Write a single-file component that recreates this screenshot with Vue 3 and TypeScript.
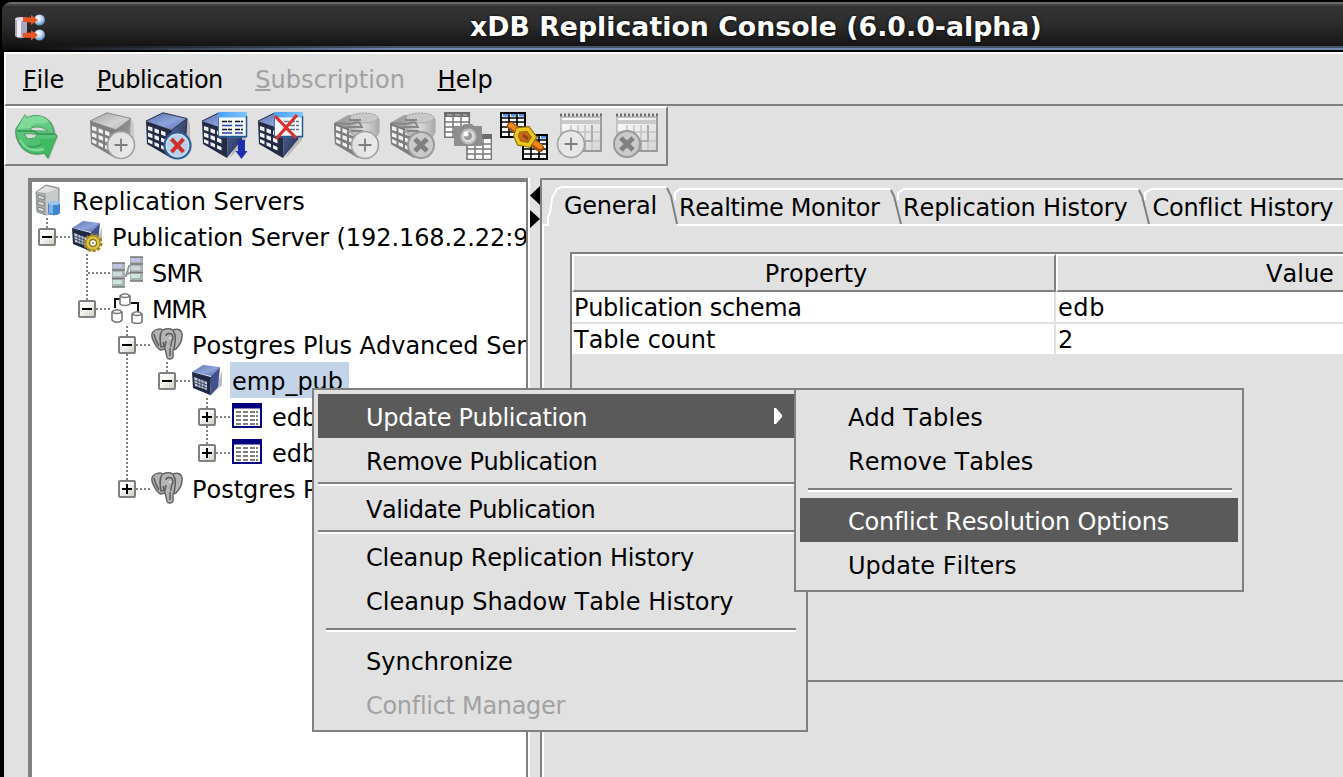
<script setup lang="ts">
interface TreeRow {
  label: string
  depth: number
  icon: string
  box?: '+' | '-'
  selected?: boolean
  track?: number
}
interface MenuEntry {
  label?: string
  kind?: 'wide' | 'inset'
  active?: boolean
  disabled?: boolean
  arrow?: boolean
  track?: number
}

const spacing = (px?: number) => ({ letterSpacing: (px ?? 0) + 'px' })

const menus = [
  { key: 'F', rest: 'ile', disabled: false, track: -0.2 },
  { key: 'P', rest: 'ublication', disabled: false, track: -0.55 },
  { key: 'S', rest: 'ubscription', disabled: true, track: 0.05 },
  { key: 'H', rest: 'elp', disabled: false, track: 0.2 },
]

const toolGroups: string[][] = [
  ['refresh'],
  ['cube-add', 'cube-remove', 'cube-sub', 'cube-unsub'],
  ['db-add', 'db-remove', 'snapshot', 'link', 'table-add', 'table-remove'],
]

const rows: TreeRow[] = [
  { label: 'Replication Servers', depth: 0, icon: 'server', track: 0 },
  { label: 'Publication Server (192.168.2.22:9051)', depth: 1, icon: 'pubserver', box: '-', track: -0.08 },
  { label: 'SMR', depth: 2, icon: 'smr', track: -0.8 },
  { label: 'MMR', depth: 2, icon: 'mmr', box: '-', track: -1.4 },
  { label: 'Postgres Plus Advanced Server', depth: 3, icon: 'elephant', box: '-' },
  { label: 'emp_pub', depth: 4, icon: 'cube-small', box: '-', selected: true },
  { label: 'edb.dept', depth: 5, icon: 'grid', box: '+' },
  { label: 'edb.emp', depth: 5, icon: 'grid', box: '+' },
  { label: 'Postgres Plus Advanced Server', depth: 3, icon: 'elephant', box: '+' },
]

const connectors = [
  'M47 218V228', 'M56 237H72',
  'M87 254V300', 'M88 273H112', 'M96 309H112',
  'M127 326V336', 'M127 354V480', 'M136 345H152', 'M136 489H152',
  'M167 362V372', 'M176 381H192',
  'M207 398V408', 'M207 426V444', 'M216 417H232', 'M216 453H232',
]

const tabs = [
  { label: 'General', track: -0.25 },
  { label: 'Realtime Monitor', track: -0.33 },
  { label: 'Replication History', track: -0.12 },
  { label: 'Conflict History', track: -0.2 },
]
const props = [
  { name: 'Publication schema', value: 'edb', nameTrack: -0.33, valueTrack: 0.6 },
  { name: 'Table count', value: '2', nameTrack: 0, valueTrack: 0 },
]

const mainMenu: MenuEntry[] = [
  { label: 'Update Publication', active: true, arrow: true, track: -0.3 },
  { label: 'Remove Publication', track: -0.38 },
  { kind: 'wide' },
  { label: 'Validate Publication', track: -0.45 },
  { kind: 'wide' },
  { label: 'Cleanup Replication History', track: -0.19 },
  { label: 'Cleanup Shadow Table History' },
  { kind: 'inset' },
  { label: 'Synchronize' },
  { label: 'Conflict Manager', disabled: true, track: -0.3 },
]
const subMenu: MenuEntry[] = [
  { label: 'Add Tables', track: 0.2 },
  { label: 'Remove Tables', track: 0.05 },
  { kind: 'inset' },
  { label: 'Conflict Resolution Options', active: true, track: -0.16 },
  { label: 'Update Filters', track: 0.03 },
]
</script>

<template>
  <div class="window">
    <svg class="defs" width="0" height="0">
      <defs>
        <linearGradient id="gBlue" x1="0" y1="0" x2="1" y2="1">
          <stop offset="0" stop-color="#5b6faa" /><stop offset=".55" stop-color="#8ea2dc" /><stop offset="1" stop-color="#5468a6" />
        </linearGradient>
        <linearGradient id="gGray" x1="0" y1="0" x2="1" y2="1">
          <stop offset="0" stop-color="#a5a5a5" /><stop offset=".6" stop-color="#d2d2d2" /><stop offset="1" stop-color="#b0b0b0" />
        </linearGradient>
        <linearGradient id="gSide" x1="0" y1="0" x2="1" y2="1">
          <stop offset="0" stop-color="#5567a2" /><stop offset="1" stop-color="#222a48" />
        </linearGradient>
        <linearGradient id="gSideG" x1="0" y1="0" x2="1" y2="1">
          <stop offset="0" stop-color="#777" /><stop offset="1" stop-color="#a8a8a8" />
        </linearGradient>
        <linearGradient id="gSky" x1="0" y1="0" x2="1" y2="0">
          <stop offset="0" stop-color="#4aa0f4" /><stop offset="1" stop-color="#7dc4fb" />
        </linearGradient>
        <linearGradient id="gGreen" x1="0" y1="0" x2="0" y2="1">
          <stop offset="0" stop-color="#6fcf8a" /><stop offset="1" stop-color="#3fb864" />
        </linearGradient>
        <linearGradient id="gCyl" x1="0" y1="0" x2="1" y2="0">
          <stop offset="0" stop-color="#a9a9a9" /><stop offset=".5" stop-color="#dadada" /><stop offset="1" stop-color="#ababab" />
        </linearGradient>
        <linearGradient id="gSheet" x1="0" y1="0" x2="1" y2="1">
          <stop offset="0" stop-color="#fff" /><stop offset="1" stop-color="#d4d4d4" />
        </linearGradient>
        <radialGradient id="gSphere" cx=".4" cy=".35" r=".7">
          <stop offset="0" stop-color="#fff" /><stop offset=".45" stop-color="#c3dcf8" /><stop offset="1" stop-color="#4d7cbb" />
        </radialGradient>
      </defs>

      <symbol id="windows" viewBox="0 0 48 48">
        <path d="M4 14l4.500 1.600v4L4 18zM10.500 16.300l4.500 1.600v4l-4.500-1.600zM17 18.600l4.500 1.600v4L17 22.600zM4 20.500l4.500 1.800v4L4 24.500zM10.500 23l4.500 1.800v4L10.500 27zM17 25.600l4.500 1.800v4L17 29.600zM4 27l4.500 2v3.600l-4.500-2zM10.500 30l4.500 2v3.600l-4.500-2zM17 33l4.500 2v3.600l-4.500-2z" fill="#eef0f2" />
      </symbol>
      <symbol id="cube" viewBox="0 0 48 48">
        <path d="M30 46L46 28V12l-2-5-8 24z" fill="#000" opacity=".18" />
        <path d="M2 9L19 .8 43 6.500 28 18z" fill="url(#gBlue)" />
        <path d="M28 18L43 6.500 41.500 28 27 46z" fill="url(#gSide)" />
        <path d="M2 9l26 9-1 28L3 32z" fill="#232b45" />
        <path d="M2 9L19 .8 43 6.500M41.500 28L43 6.500 28 18" fill="none" stroke="#252d48" stroke-width="1" />
        <use href="#windows" />
      </symbol>
      <symbol id="cubeG" viewBox="0 0 48 48">
        <path d="M30 46L46 28V12l-2-5-8 24z" fill="#000" opacity=".1" />
        <path d="M2 9L19 .8 43 6.500 28 18z" fill="url(#gGray)" stroke="#8b8b8b" />
        <path d="M28 18L43 6.500 41.500 28 27 46z" fill="url(#gSideG)" />
        <path d="M2 9l26 9-1 28L3 32z" fill="#808080" />
        <use href="#windows" />
      </symbol>
      <symbol id="dbG" viewBox="0 0 48 48">
        <path d="M2 11L16 3l14 0 8 16-6 26-5 1L3 32z" fill="#a2a2a2" />
        <path d="M2 11l25 8-1 27L3 32z" fill="#7d7d7d" />
        <use href="#windows" />
        <path d="M17 7V20l9 7h17l4-7V7z" fill="url(#gCyl)" stroke="#a4a4a4" />
        <ellipse cx="32" cy="6" rx="14" ry="5" fill="#c8c8c8" stroke="#999" stroke-dasharray="2 1" />
        <path d="M3 11l14 1 10-2M15 15h15l-3-5M19 19h12M17 8h12" stroke="#868686" stroke-width="1.800" fill="none" />
      </symbol>
      <symbol id="badgeAdd" viewBox="0 0 48 48">
        <circle cx="33" cy="33" r="13.500" fill="#e8e8e8" fill-opacity=".94" stroke="#a0a0a0" stroke-width="1.600" />
        <path d="M33 26.500v13M26.500 33h13" stroke="#7d7d7d" stroke-width="1.800" />
      </symbol>
      <symbol id="badgeDel" viewBox="0 0 48 48">
        <circle cx="33" cy="33" r="13" fill="#cacaca" stroke="#999" stroke-width="2" />
        <path d="M27 27l12 12M39 27l-12 12" stroke="#808080" stroke-width="5" />
      </symbol>
      <symbol id="cube-add" viewBox="0 0 48 48"><use href="#cubeG" /><use href="#badgeAdd" /></symbol>
      <symbol id="cube-remove" viewBox="0 0 48 48">
        <use href="#cube" />
        <circle cx="33.500" cy="33.500" r="13" fill="#b9cfe9" stroke="#2e5f9a" stroke-width="2.200" />
        <circle cx="33.500" cy="33.500" r="11.200" fill="none" stroke="#d4e3f5" stroke-width="1" />
        <path d="M27.500 27l12 13M39.500 27l-12 13" stroke="#cf2d28" stroke-width="4" />
      </symbol>
      <symbol id="panel" viewBox="0 0 48 48">
        <path d="M18.500 1h28v24h-28z" fill="#f4faff" stroke="#3c76b8" />
        <path d="M18 0h29v5.500H18z" fill="url(#gSky)" />
        <path d="M18 24.500h28.500V4" fill="none" stroke="#235a8e" stroke-width="1.500" />
      </symbol>
      <symbol id="cube-sub" viewBox="0 0 48 48">
        <use href="#cube" /><use href="#panel" />
        <path d="M22 9.500h10M35 9.500h8M22 17.500h10M35 17.500h8" stroke="#111" stroke-width="1.600" stroke-dasharray="5 1" />
        <path d="M22 13.500h10M35 13.500h8M22 21h10M35 21h8" stroke="#2c3db2" stroke-width="1.600" />
        <path d="M38 28h7v11h2.500l-6 8-6-8H38z" fill="#1c30ae" />
      </symbol>
      <symbol id="cube-unsub" viewBox="0 0 48 48">
        <use href="#cube" /><use href="#panel" />
        <path d="M28 9.500h15M28 13.500h15M28 17.500h15" stroke="#63738e" stroke-width="1.500" stroke-dasharray="5 1" />
        <path d="M19 4l21 22M41 3L20 27" stroke="#dc302a" stroke-width="3.200" />
      </symbol>
      <symbol id="db-add" viewBox="0 0 48 48"><use href="#dbG" /><use href="#badgeAdd" /></symbol>
      <symbol id="db-remove" viewBox="0 0 48 48"><use href="#dbG" /><use href="#badgeDel" /></symbol>
      <symbol id="refresh" viewBox="0 0 48 48">
        <path d="M14 4c10-3 24-1 29 13l3 9-9 21-4-5C18 46 8 38 6 27z" fill="#222" opacity=".13" />
        <path d="M13 3l2 3c8-4 17-3 22 3 3 3 5 7 5 12l3 3-9 22-4-5c-9 3-19 0-24-8-3-5-5-11-4-16z" fill="url(#gGreen)" stroke="#4a9a62" stroke-width="1.200" />
        <path d="M5 17l8-14 2 3c9-4 18-3 22 4l-6 2-6-1-6 3 3 2z" fill="#86dd9d" opacity=".8" />
        <path d="M19 16c6-2 13-1 17 3l-17 0zM12 22c5-1 10 0 13 1l-2 3-7 1z" fill="#d3ddd4" stroke="#4a9a62" />
        <path d="M5 19h17l4 3h16M8 31c5 4 13 6 20 2l5-4" fill="none" stroke="#2f9450" stroke-width="1.300" />
        <path d="M8 28c5 9 13 12 24 9" fill="none" stroke="#7cd896" stroke-width="2.500" />
        <path d="M27 27l17-1-8 19z" fill="#3fba62" />
      </symbol>
      <symbol id="snapshot" viewBox="0 0 48 48">
        <g fill="#fff" stroke="#777" stroke-width="1.600">
          <path d="M.8.8h24.500v24.500H.8zM23 23h24.500v24.500H23z" />
        </g>
        <path d="M0 0h26v5H0zM22 22h26v5H22z" fill="#6c6c6c" />
        <path d="M1 10h24M1 15h24M1 20h24M9 1v24M17 1v24M23 32h24M23 37h24M23 42h24M31 23v24M39 23v24" stroke="#777" stroke-width="1.500" />
        <path d="M3 3h5M11 3h5M19 3h4" stroke="#aaa" stroke-width="1.500" />
        <path d="M10 14h8l2-2h8l2 2h8v20H10z" fill="#8e8e8e" />
        <circle cx="24.500" cy="24.500" r="7" fill="#ddd" stroke="#bcbcbc" stroke-width="2" /><circle cx="24" cy="24" r="4" fill="#999" /><circle cx="22" cy="22" r="2.500" fill="#fff" />
      </symbol>
      <symbol id="link" viewBox="0 0 48 48">
        <path d="M1 1h24v24H1zM23 23h24v24H23z" fill="#fff" stroke="#000" stroke-width="2" />
        <path d="M1 6h24M1 10h24M1 15h24M1 20h24M9 1v24M17 1v24M23 28h24M23 32h24M23 37h24M23 42h24M31 23v24M39 23v24" stroke="#000" stroke-width="1.600" />
        <path d="M3 3.200h5M11 3.200h5M19 3.200h5M33 25.200h5M41 25.200h5" stroke="#4d92ee" stroke-width="2.400" />
        <path d="M11 14l10 7M31 29l9 7" stroke="#a04c10" stroke-width="8" stroke-linecap="round" />
        <path d="M11 13.500l10 7M31 28.500l9 6" stroke="#f0881a" stroke-width="5" stroke-linecap="round" />
        <path d="M18 18l10-1 6 8-5 8-10-2-3-7z" fill="#ce6619" stroke="#8a6c00" stroke-width="5.500" />
        <path d="M18 18l10-1 6 8-5 8-10-2-3-7z" fill="none" stroke="#edc51d" stroke-width="3.500" />
        <path d="M23 23l5 4" stroke="#8f4412" stroke-width="3" />
      </symbol>
      <symbol id="sheet" viewBox="0 0 48 48">
        <path d="M5 5h40v34H5z" fill="url(#gSheet)" stroke="#b3b3b3" stroke-width="1.500" />
        <path d="M4 3h43" stroke="#6e6e6e" stroke-width="3" stroke-dasharray="2 2" />
        <path d="M5 8h40v4H5z" fill="#c9c9c9" />
        <path d="M6 20h38M6 29h38M15 13v25M22 13v25M29 13v25M36 13v25" stroke="#c4c4c4" stroke-width="1.500" />
        <path d="M36 13v16h-7v9" fill="none" stroke="#a2a2a2" stroke-width="1.500" />
        <path d="M45 5v34H26" fill="none" stroke="#999" stroke-width="1.800" />
      </symbol>
      <symbol id="table-add" viewBox="0 0 48 48"><use href="#sheet" /><use href="#badgeAdd" x="-18" y="-1" /></symbol>
      <symbol id="table-remove" viewBox="0 0 48 48"><use href="#sheet" /><use href="#badgeDel" x="-18" y="-1" /></symbol>

      <symbol id="server" viewBox="0 0 32 32">
        <path d="M1 8L11 1l13 3v24l-13 3-9-3z" fill="#a7abaa" stroke="#8c9290" />
        <path d="M2 8l9-6 12 3-12 4z" fill="#e0e3e2" />
        <path d="M11 9l12-4v23l-12 3z" fill="#c7cbca" />
        <path d="M3 11l6 2v3l-6-2zM3 17l6 2v3l-6-2zM3 23l6 2v3l-6-2z" fill="#dfe2e2" stroke="#777" stroke-width=".8" />
        <path d="M13 19v10c2 3 10 3 12 0V19z" fill="#3f86cf" />
        <path d="M14 20v9l4 1V20z" fill="#84b5e8" />
        <ellipse cx="19" cy="19" rx="6" ry="2" fill="#9bc6ef" />
      </symbol>
      <symbol id="cube-small" viewBox="0 0 32 32">
        <path d="M20 31l11-10V7l-3 8z" fill="#000" opacity=".25" />
        <path d="M1 8L12 1l17 2-9 9z" fill="url(#gBlue)" />
        <path d="M20 12l9-9-2 20-8 9z" fill="#41518f" />
        <path d="M1 8l19 5-1 18L2 24z" fill="#1f2844" />
        <path d="M3 13l13 5v8L4 22z" fill="#cbd2da" />
        <path d="M3 16l13 5M4 19l12 5M7 14v9M10 15v9M13 16v9" stroke="#3b4563" />
      </symbol>
      <symbol id="pubserver" viewBox="0 0 32 32">
        <use href="#cube-small" />
        <circle cx="22" cy="23" r="8" fill="#d7be3f" stroke="#9b8528" stroke-width="3" stroke-dasharray="3 2" />
        <circle cx="22" cy="23" r="7" fill="#dcc549" stroke="#a88e23" />
        <circle cx="22" cy="23" r="3.500" fill="#fff" stroke="#8b741c" stroke-width="1.500" /><circle cx="22" cy="23" r="1" fill="#8b741c" />
      </symbol>
      <symbol id="rack" viewBox="0 0 14 26">
        <path d="M0 1h13v24H0z" fill="#a9b5b2" />
        <path d="M1 2h9v4H1z" fill="#bfc2e4" /><path d="M1 10h9v4H1z" fill="#ccd8dc" /><path d="M1 18h9v4H1z" fill="#cde6d8" />
        <path d="M0 1h13M0 8h13M0 16.500h13M0 25h13" stroke="#777" stroke-width="1.500" />
      </symbol>
      <symbol id="smr" viewBox="0 0 32 32">
        <path d="M12 20h3l3-10h3M12 20l9-4" stroke="#999" stroke-width="2" fill="none" />
        <use href="#rack" x="1" y="6" width="14" height="26" /><use href="#rack" x="19" y="0" width="14" height="26" />
      </symbol>
      <symbol id="mmr" viewBox="0 0 32 32">
        <path d="M4 16V7h5M20 11h7v9" stroke="#111" stroke-width="2" fill="none" />
        <g fill="#fff" stroke="#777" stroke-width="1.600"><path d="M9 4v8c2 2 8 2 10 0V4c-2-3-8-3-10 0zM1 20v8c2 3 8 3 10 0v-8c-2-3-8-3-10 0zM21 22v8c2 2 8 2 10 0v-8c-2-3-8-3-10 0z" /><path d="M9 4c2 2 8 2 10 0M1 20c2 2 8 2 10 0M21 22c2 2 8 2 10 0" fill="none" /></g>
      </symbol>
      <symbol id="elephant" viewBox="0 0 32 32">
        <path d="M2 4C5 0 10 1 12 2c4-2 8-1 10 0 5-2 10 0 9 6 0 5-3 10-6 13l-3 1v7c-1 3-5 3-6 0l-2-8-4 1C6 21-2 8 2 4z" fill="#b4b4b4" stroke="#666" stroke-width="1.500" />
        <path d="M11 3c-3 4-2 10-1 16l4-1 1-5M14 20l-2-6M22 3c4 5 2 10 1 18M15 8c0-3 6-4 7 1 0 4-3 5-2 10M19 20v8M3 6c1 5 3 9 5 12" fill="none" stroke="#5c5c5c" stroke-width="1.500" />
        <circle cx="19" cy="10" r="1" fill="#eee" />
      </symbol>
      <symbol id="grid" viewBox="0 0 32 32">
        <path d="M2 4h28v23H2z" fill="#fff" stroke="#000080" stroke-width="2" />
        <path d="M1 3h30v5.500H1z" fill="#000080" />
        <path d="M5 12h5M12 12h5M19 12h5M25 12h2M5 16h5M12 16h5M19 16h5M25 16h2M5 20h5M12 20h5M19 20h5M25 20h2M5 24h5M12 24h5M19 24h5M25 24h2" stroke="#808080" stroke-width="1.800" />
      </symbol>
    </svg>

    <header class="titlebar">
      <svg class="appicon" viewBox="0 0 32 30">
        <path d="M1 7h12v17c-3 3-9 3-12 0z" fill="#aaa7c0" /><path d="M3 8h4v17H3z" fill="#f0eefa" /><ellipse cx="7" cy="7" rx="6" ry="2" fill="#dddbe9" />
        <circle cx="25.500" cy="8" r="5.500" fill="url(#gSphere)" /><circle cx="25.500" cy="23" r="5.500" fill="url(#gSphere)" />
        <path d="M9 5l8 .500V3l7 5-7 5v-2.500L9 10zM9 21l8-.500V18l7 5-7 5.500V26l-8-.500z" fill="#ea5420" />
      </svg>
      <h1>xDB Replication Console (6.0.0-alpha)</h1>
    </header>

    <div class="client">
      <nav class="menubar">
        <span v-for="m in menus" :key="m.key" class="menu" :class="{ off: m.disabled }" :style="spacing(m.track)"><u>{{ m.key }}</u>{{ m.rest }}</span>
      </nav>
      <div class="toolbar">
        <div v-for="(g, i) in toolGroups" :key="i" class="tools">
          <svg v-for="t in g" :key="t" class="tool"><use :href="'#' + t" /></svg>
        </div>
      </div>

      <main class="split">
        <section class="tree">
          <svg class="guides" viewBox="32 182 494 595">
            <path v-for="c in connectors" :key="c" :d="c" />
          </svg>
          <div v-for="(r, i) in rows" :key="i" class="row" :class="'d' + r.depth">
            <span class="twist"><span v-if="r.box" class="box" :class="{ plus: r.box === '+' }" /></span>
            <svg class="ico"><use :href="'#' + r.icon" /></svg>
            <span class="label" :class="{ selected: r.selected }" :style="spacing(r.track)">{{ r.label }}</span>
          </div>
        </section>

        <div class="divider">
          <svg viewBox="0 0 10 44"><path d="M10 0v19L0 9.500zM0 24v18l10-9z" /></svg>
        </div>

        <section class="detail">
          <div class="tabs">
            <svg class="tabshape" viewBox="542 180 801 46">
              <path class="hi" d="M542 225h6v-8l2-4 2-15 5-9 5-2h104M675 200v-7l5-4h210M898 200v-7l6-4h234M1145 200v-7l6-4h192M677 225h666" />
              <path class="lo" d="M667 188l4 8 6 28M891 190l3 6 7 28M1139 190l3 6 7 28" />
            </svg>
            <span v-for="(t, i) in tabs" :key="t.label" class="tab" :class="'t' + i" :style="spacing(t.track)">{{ t.label }}</span>
          </div>
          <div class="scroll">
            <div class="grid">
              <div class="cell head">Property</div>
              <div class="cell head">Value</div>
              <template v-for="p in props" :key="p.name">
                <div class="cell" :style="spacing(p.nameTrack)">{{ p.name }}</div>
                <div class="cell" :style="spacing(p.valueTrack)">{{ p.value }}</div>
              </template>
            </div>
          </div>
        </section>
      </main>
    </div>

    <div class="popup main">
      <template v-for="(e, i) in mainMenu" :key="i">
        <div v-if="e.kind" class="sep" :class="e.kind" />
        <div v-else class="item" :class="{ active: e.active, off: e.disabled }">
          <span :style="spacing(e.track)">{{ e.label }}</span>
          <svg v-if="e.arrow" class="arrow" viewBox="0 0 8 16"><path d="M0 0h2l6 7v2l-6 7H0z" /></svg>
        </div>
      </template>
    </div>
    <div class="popup sub">
      <template v-for="(e, i) in subMenu" :key="i">
        <div v-if="e.kind" class="sep" :class="e.kind" />
        <div v-else class="item" :class="{ active: e.active }"><span :style="spacing(e.track)">{{ e.label }}</span></div>
      </template>
    </div>
  </div>
</template>

<style>
body { margin: 0; overflow: hidden; background: #000; }
</style>

<style scoped>
* { box-sizing: border-box; }
.window {
  position: relative; width: 1343px; height: 777px; overflow: hidden;
  display: flex; flex-direction: column; background: #000;
  font: 24px/28px "DejaVu Sans", sans-serif; color: #000; white-space: nowrap;
  font-kerning: none;
}
.defs { position: absolute; }
.titlebar {
  flex: none; height: 50px; margin-left: 2px; border-radius: 10px 0 0 0; border-top: 2px solid #000;
  background: linear-gradient(90deg, transparent 20px, #7189b4 400px) 0 46px / 100% 2px no-repeat,
    linear-gradient(90deg, transparent 20px, #46546b 400px) 0 44px / 100% 2px no-repeat,
    linear-gradient(#6c6c6c 0, #6c6c6c 2px, #444 2px, #444 4px, #343434 4px, #2c2c2c 22px, #171717 42px, #0b0b0b 48px);
  display: flex; align-items: flex-start;
}
.appicon { width: 32px; height: 30px; margin: 10px 0 0 12px; }
.titlebar h1 { margin: 9px 0 0 424px; font-size: 26.700px; line-height: 31px; font-weight: 700; color: #fff; letter-spacing: .05px; text-shadow: 0 0 3px #000; }
.client { flex: 1; margin: 2px 0 0 4px; background: #e1e1e1; display: flex; flex-direction: column; min-height: 0; }
.menubar {
  flex: none; height: 54px; border-top: 2px solid #fff; border-left: 2px solid #fff; border-bottom: 2px solid #808080;
  display: flex; gap: 32.500px; padding: 12px 0 0 17px;
}
.menu u { text-decoration-thickness: 2px; text-underline-offset: 1px; text-decoration-skip-ink: none; }
.off { color: #a2a2a2; }
.toolbar {
  flex: none; width: 664px; height: 60px; border: 2px solid #808080; border-top-color: #fff; border-left-color: #fff;
  display: flex; gap: 28px; padding: 4px 0 0 6px;
}
.tools { display: flex; gap: 8px; }
.tool { width: 48px; height: 48px; display: block; }
.split { flex: 1; display: flex; margin: 12px 0 0 24px; min-height: 0; }
.tree {
  position: relative; flex: none; width: 500px; overflow: hidden; background: #fff;
  border: solid #808080; border-width: 4px 2px 0 4px;
}
.guides { position: absolute; left: 0; top: 0; width: 494px; height: 595px; }
.guides path { stroke: #808080; stroke-width: 2; stroke-dasharray: 2 2; fill: none; }
.row { position: relative; display: flex; align-items: center; height: 36px; }
.d0 { margin-left: -21px; }
.d1 { margin-left: 6px; }
.d2 { margin-left: 46px; }
.d3 { margin-left: 86px; }
.d4 { margin-left: 126px; }
.d5 { margin-left: 166px; }
.twist { flex: none; width: 18px; margin-right: 15px; height: 18px; margin-top: 2px; }
.d0 .twist { margin-right: 6px; }
.box {
  display: block; width: 18px; height: 18px; border: 2px solid #808080; border-radius: 2px;
  background: linear-gradient(#000, #000) center / 10px 2px no-repeat, linear-gradient(135deg, #fff 30%, #d2cdc2);
}
.plus { background: linear-gradient(#000, #000) center / 10px 2px no-repeat, linear-gradient(#000, #000) center / 2px 10px no-repeat, linear-gradient(135deg, #fff 30%, #d2cdc2); }
.ico { flex: none; width: 32px; height: 32px; margin-right: 7px; }
.d0 .ico { margin-right: 3px; }
.label { height: 36px; padding: 6px 6px 0 2px; line-height: 28px; }
.selected { background: #c3d3e8; }
.divider { flex: none; width: 12px; border-left: 2px solid #fff; }
.divider svg { display: block; width: 10px; height: 44px; margin-top: 8px; }
.detail { flex: 1; min-width: 0; border-left: 2px solid #808080; border-top: 2px solid #808080; display: flex; flex-direction: column; position: relative; }
.detail::before { content: ""; position: absolute; left: 0; top: 44px; bottom: 0; width: 2px; background: #fff; }
.tabs { position: relative; flex: none; height: 46px; display: flex; padding-left: 22px; }
.tabshape { position: absolute; left: 0; top: 0; width: 801px; height: 46px; }
.hi { fill: none; stroke: #fff; stroke-width: 2; }
.lo { fill: none; stroke: #808080; stroke-width: 2; }
.tab { position: relative; flex: none; padding-top: 14px; }
.t0 { width: 115px; padding-top: 12px; }
.t1 { width: 224px; }
.t2 { width: 249.500px; }
.scroll { height: 430px; margin: 26px 0 0 28px; border: solid #808080; border-width: 2px 0 2px 2px; flex: none; }
.grid { display: grid; grid-template-columns: 484px 484px; grid-template-rows: 38px 32px 30px; width: 968px; background: #fff; }
.cell { padding-top: 2px; padding-left: 2px; border-right: 2px solid #e1e1e1; border-bottom: 2px solid #e1e1e1; }
.cell:nth-child(n + 5) { border-bottom: 0; }
.head { text-align: center; background: #e1e1e1; border: 2px solid #fff; border-right-color: #808080; border-bottom-color: #808080; padding: 4px 0 0 4px; }
.popup { position: absolute; top: 388px; border: 2px solid #808080; background: #e1e1e1; padding: 4px; }
.main { left: 312px; width: 496px; height: 344px; }
.sub { left: 794px; width: 450px; height: 204px; }
.item { height: 44px; display: flex; align-items: center; padding: 3px 0 0 48px; }
.active { background: #5a5a5a; color: #fff; }
.arrow { width: 8px; height: 16px; margin: -3px 20px 0 auto; fill: #fff; }
.sep { height: 4px; background: linear-gradient(#808080 50%, #fff 50%); }
.sep.inset { margin: 6px 6px 6px 8px; }
</style>
